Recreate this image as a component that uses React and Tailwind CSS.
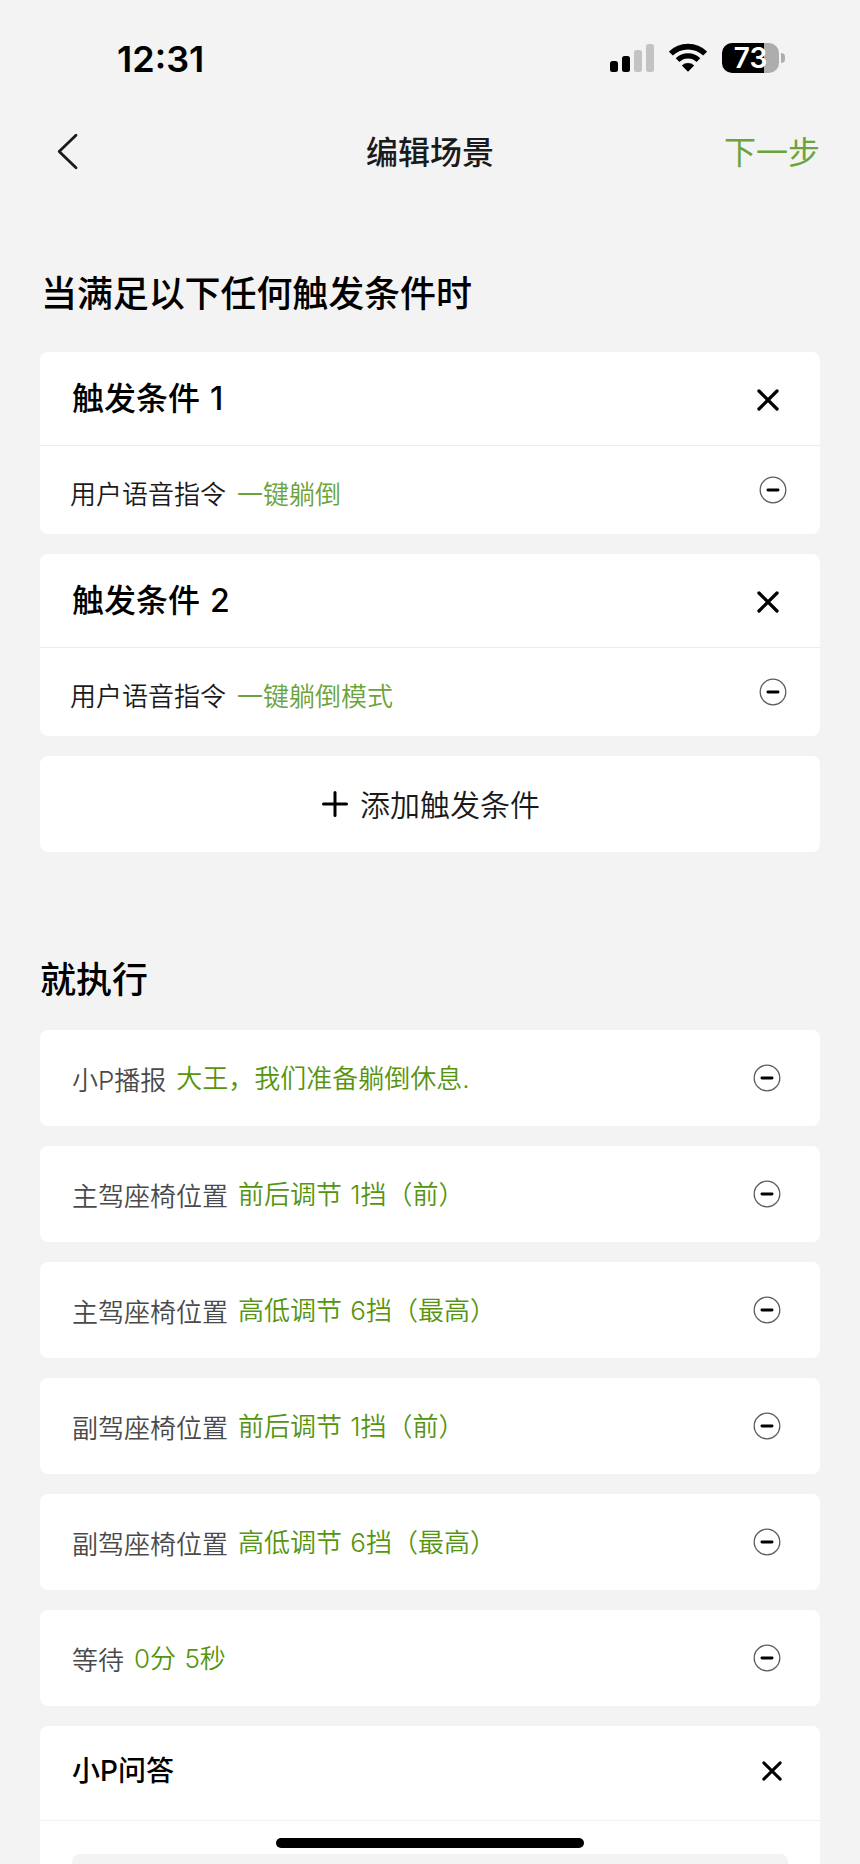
import React from 'react';

const triggers = [
  { id: 1, command: '一键躺倒' },
  { id: 2, command: '一键躺倒模式' },
];

const actions = [
  { label: '小P播报', value: '大王，我们准备躺倒休息.' },
  { label: '主驾座椅位置', value: '前后调节 1挡（前）' },
  { label: '主驾座椅位置', value: '高低调节 6挡（最高）' },
  { label: '副驾座椅位置', value: '前后调节 1挡（前）' },
  { label: '副驾座椅位置', value: '高低调节 6挡（最高）' },
  { label: '等待', value: '0分 5秒' },
];

const MinusIcon = () => (
  <svg width="28" height="28" viewBox="0 0 28 28" fill="none">
    <circle cx="14" cy="14" r="12.8" stroke="#5c5c5c" strokeWidth="1.3" />
    <path d="M8.9 14h10.2" stroke="#000" strokeWidth="2.8" strokeLinecap="round" />
  </svg>
);

const CloseIcon = ({ size }) => (
  <svg width={size} height={size} viewBox="0 0 22 22" fill="none">
    <path d="M2 2l18 18M20 2L2 20" stroke="#000" strokeWidth="3.3" strokeLinecap="round" />
  </svg>
);

const StatusBar = () => (
  <div className="flex h-[100px] items-center justify-between pt-[16px] pr-[75px] pl-[117px]">
    <span className="pt-[2px] text-[36px] leading-none font-semibold">12:31</span>
    <div className="flex items-center">
      <svg width="44" height="30" viewBox="0 0 44 30">
        <rect x="0" y="18" width="8" height="11" rx="2.5" fill="#000" />
        <rect x="12" y="13" width="8" height="16" rx="2.5" fill="#000" />
        <rect x="24" y="7" width="8" height="22" rx="2.5" fill="#c3c3c3" />
        <rect x="36" y="1" width="8" height="28" rx="2.5" fill="#c3c3c3" />
      </svg>
      <svg className="ml-[15px]" width="38" height="30" viewBox="0 0 38 30" fill="none" stroke="#000">
        <path d="M1.9 10.6A24.5 24.5 0 0 1 36.1 10.6" strokeWidth="5.6" />
        <path d="M8.6 17.1A15 15 0 0 1 29.4 17.1" strokeWidth="5.4" />
        <path d="M19 28.8l-6.2-6.2a9 9 0 0 1 12.4 0z" fill="#000" stroke="none" />
      </svg>
      <div className="ml-[15px] flex h-[30px] w-[57px] items-center justify-center rounded-[10px] bg-[linear-gradient(to_right,#000_42px,#adadad_42px)]">
        <span className="text-[28px] leading-none font-semibold text-white">73</span>
      </div>
      <div className="ml-[2px] h-[10px] w-[4px] rounded-r-full bg-[#adadad]" />
    </div>
  </div>
);

const Header = () => (
  <div className="grid h-[104px] grid-cols-3 items-center px-[40px] text-[32px] leading-none">
    <svg className="ml-[15px]" width="24" height="38" viewBox="0 0 24 38" fill="none">
      <path d="M21 2.2L4.2 18.5L21 34.8" stroke="#1a1a1a" strokeWidth="2.8" strokeLinecap="round" strokeLinejoin="round" />
    </svg>
    <h1 className="pt-[2px] text-center font-medium text-[#1a1a1a]">编辑场景</h1>
    <button className="pt-[2px] text-right text-[#6ba33c]">下一步</button>
  </div>
);

const TriggerCard = ({ id, command }) => (
  <div className="h-[182px] rounded-[8px] bg-white">
    <div className="flex h-[94px] items-center justify-between border-b border-[#ececec] pt-[2px] pr-[41px] pl-8">
      <h3 className="pb-[2px] text-[32px] leading-none font-medium [word-spacing:1.5px]">触发条件 {id}</h3>
      <CloseIcon size={22} />
    </div>
    <div className="flex h-[88px] items-center justify-between pr-[33px] pl-[30px]">
      <p className="flex gap-[11px] pt-[10px] text-[26px] leading-none font-[350]">
        <span className="text-[#1a1a1a]">用户语音指令</span>
        <span className="text-[#6ba33c]">{command}</span>
      </p>
      <MinusIcon />
    </div>
  </div>
);

const ActionCard = ({ label, value }) => (
  <div className="flex h-24 items-center justify-between rounded-[8px] bg-white pr-[39px] pl-8">
    <p className="flex items-center gap-[10px] text-[26px] leading-none font-[350]">
      <span className="pt-[5px] text-[#4a4a4a]">{label}</span>
      <span className="pt-[2px] text-[#56940f] [word-spacing:1px]">{value}</span>
    </p>
    <MinusIcon />
  </div>
);

const App = () => (
  <div className="relative h-[1864px] w-[860px] overflow-hidden bg-[#f3f3f3] font-['Inter','Noto_Sans_CJK_SC',sans-serif] text-black">
    <StatusBar />
    <Header />
    <main className="px-10">
      <h2 className="flex h-[148px] items-center pt-[32px] pl-[1px] text-[36px] leading-none font-medium tracking-[-0.1px]">当满足以下任何触发条件时</h2>
      <div className="flex flex-col gap-5">
        {triggers.map(t => <TriggerCard key={t.id} {...t} />)}
        <button className="flex h-24 items-center justify-center gap-[12px] rounded-[8px] bg-white pl-[2px] text-[30px] leading-none font-[350] text-[#1a1a1a]">
          <svg width="26" height="26" viewBox="0 0 26 26" fill="none">
            <path d="M13 1.5v23M1.5 13h23" stroke="#000" strokeWidth="3" strokeLinecap="round" />
          </svg>
          <span className="pt-[2px]">添加触发条件</span>
        </button>
      </div>
      <h2 className="flex h-[178px] items-center pt-[78px] text-[36px] leading-none font-medium">就执行</h2>
      <div className="flex flex-col gap-5">
        {actions.map((a, i) => <ActionCard key={i} {...a} />)}
        <div className="h-[240px] rounded-[8px] bg-white">
          <div className="flex h-[95px] items-center justify-between border-b border-[#f0f0f0] pr-[38px] pb-[4px] pl-8">
            <h3 className="text-[28px] leading-none font-medium">小P问答</h3>
            <CloseIcon size={20} />
          </div>
          <div className="mx-8 mt-[33px] h-20 rounded-[8px] bg-[#f3f3f3]" />
        </div>
      </div>
    </main>
    {/* home indicator */}
    <div className="absolute bottom-4 left-[276px] h-[10px] w-[308px] rounded-full bg-black" />
  </div>
);

export default App;
